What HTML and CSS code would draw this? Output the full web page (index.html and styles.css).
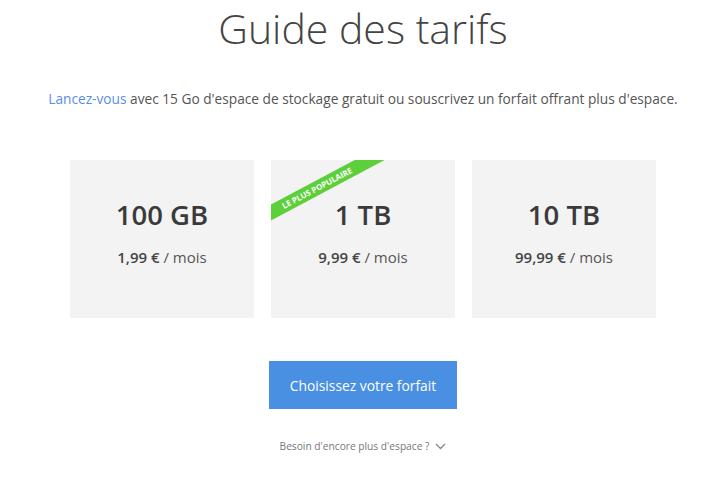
FILE: index.html
```html
<!DOCTYPE html>
<html lang="fr">
<head>
<meta charset="utf-8">
<link rel="stylesheet" href="styles.css">
</head>
<body>
<main class="page">
  <h1 class="title">Guide des tarifs</h1>
  <p class="intro"><a class="link" href="#">Lancez-vous</a> avec 15 Go d'espace de stockage gratuit ou souscrivez un forfait offrant plus d'espace.</p>
  <div class="plans">
    <div class="plan">
      <div class="size">100 GB</div>
      <div class="price"><strong>1,99 €</strong> / mois</div>
    </div>
    <div class="plan">
      <div class="ribbon">LE PLUS POPULAIRE</div>
      <div class="size">1 TB</div>
      <div class="price"><strong>9,99 €</strong> / mois</div>
    </div>
    <div class="plan">
      <div class="size">10 TB</div>
      <div class="price"><strong>99,99 €</strong> / mois</div>
    </div>
  </div>
  <a class="cta" href="#">Choisissez votre forfait</a>
  <div class="more">Besoin d'encore plus d'espace ?
    <svg class="chev" width="11" height="7" viewBox="0 0 11 7"><path d="M1 1 L5.5 5.5 L10 1" fill="none" stroke="#888" stroke-width="1.3"/></svg>
  </div>
</main>
</body>
</html>
```
FILE: styles.css
```css
* { box-sizing: border-box; }
html, body { margin: 0; padding: 0; background: #fff; }
body { font-family: "Open Sans", "Noto Sans", sans-serif; color: #444; }
.page {
  width: 708px;
  padding-left: 18px;
  display: flex;
  flex-direction: column;
  align-items: center;
}
.title {
  margin: 0;
  font-size: 41px;
  line-height: 56px;
  font-weight: 300;
  color: #444;
}
.intro {
  margin: 33px 0 0;
  font-size: 13.7px;
  line-height: 20px;
  color: #555;
}
.link { color: #5b8ee6; text-decoration: none; }
.plans {
  margin-top: 51px;
  display: flex;
  gap: 17px;
}
.plan {
  position: relative;
  overflow: hidden;
  width: 184px;
  height: 158px;
  background: #f3f3f3;
  display: flex;
  flex-direction: column;
  align-items: center;
  padding-top: 36px;
}
.size {
  font-size: 27.5px;
  line-height: 38px;
  font-weight: 600;
  color: #3a3a3a;
}
.price {
  margin-top: 13px;
  font-size: 15px;
  line-height: 20px;
  color: #555;
}
.price strong { font-weight: 600; color: #444; }
.ribbon {
  position: absolute;
  left: -34px;
  top: 21px;
  width: 160px;
  height: 14px;
  background: #5ccf3a;
  color: #fff;
  font-size: 8px;
  font-weight: 700;
  line-height: 14px;
  text-align: center;
  transform: rotate(-28deg);
}
.cta {
  margin-top: 43px;
  width: 188px;
  height: 48px;
  background: #4a90e2;
  color: #fff;
  text-decoration: none;
  font-size: 13.8px;
  display: flex;
  align-items: center;
  justify-content: center;
}
.more {
  margin-top: 30px;
  font-size: 10.2px;
  line-height: 14px;
  color: #777;
  display: flex;
  align-items: center;
  gap: 6px;
}
.chev { display: block; }
```
